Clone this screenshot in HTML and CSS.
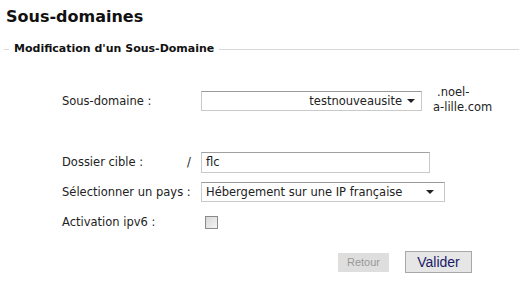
FILE: index.html
```html
<!DOCTYPE html>
<html>
<head>
<meta charset="utf-8">
<link rel="stylesheet" href="styles.css">
</head>
<body>
<h1 class="title">Sous-domaines</h1>
<fieldset class="box">
  <legend class="legend">Modification d'un Sous-Domaine</legend>
  <div class="form">
    <div class="row row-sub">
      <span class="label">Sous-domaine :</span>
      <span class="slash"></span>
      <div class="select sel-sub"><span class="sel-text right">testnouveausite</span><span class="arrow"></span></div>
      <span class="suffix"><span class="suffix-top">.noel-</span><br>a-lille.com</span>
    </div>
    <div class="row row-dir">
      <span class="label">Dossier cible :</span>
      <span class="slash">/</span>
      <div class="input">flc</div>
    </div>
    <div class="row row-pays">
      <span class="label">Sélectionner un pays :</span>
      <span class="slash"></span>
      <div class="select sel-pays"><span class="sel-text">Hébergement sur une IP française</span><span class="arrow"></span></div>
    </div>
    <div class="row row-ipv6">
      <span class="label">Activation ipv6 :</span>
      <span class="slash"></span>
      <span class="check"></span>
    </div>
    <div class="buttons">
      <span class="btn btn-back">Retour</span>
      <span class="btn btn-ok">Valider</span>
    </div>
  </div>
</fieldset>
</body>
</html>
```

FILE: styles.css
```css
html, body { margin: 0; padding: 0; background: #fff; }
body { font-family: "DejaVu Sans", Verdana, sans-serif; color: #222; width: 519px; height: 295px; overflow: hidden; }
.title { margin: 0; padding: 7px 0 0 6px; font-size: 16px; font-weight: bold; color: #111; height: 35px; line-height: 20px; letter-spacing: 0; }
.box { margin: 0 0 0 4px; padding: 0; border: 0; border-top: 1px solid #d8d8d8; min-width: 0; }
.legend { font-size: 11px; font-weight: bold; color: #111; padding: 0 5px 0 5px; margin-left: 5px; line-height: 14px; }
.form { padding-left: 58px; font-size: 11.5px; color: #222; }
.row { display: flex; align-items: center; white-space: nowrap; }
.label { width: 125px; flex: none; white-space: nowrap; }
.slash { width: 14px; flex: none; }
.row-sub { margin-top: 31px; height: 28px; }
.row-dir { margin-top: 35px; height: 24px; }
.row-pays { margin-top: 6px; height: 24px; }
.row-ipv6 { margin-top: 6px; height: 24px; }
.select { box-sizing: border-box; height: 20px; border: 1px solid #c9c9c9; border-top-color: #9a9a9a; display: flex; align-items: center; padding: 0 4px; background: #fff; }
.sel-sub { width: 221px; }
.sel-pays { width: 244px; }
.sel-text { flex: 1; white-space: nowrap; }
.sel-text.right { text-align: right; padding-right: 5px; }
.arrow { width: 0; height: 0; border-left: 4px solid transparent; border-right: 4px solid transparent; border-top: 4px solid #222; margin-right: 2px; }
.sel-pays .arrow { margin-right: 6px; }
.suffix { margin-left: 11px; line-height: 15px; margin-top: -2px; }
.suffix-top { padding-left: 4px; }
.input { box-sizing: border-box; width: 229px; height: 21px; border: 1px solid #c9c9c9; border-top-color: #a0a0a0; padding: 2px 4px; line-height: 15px; }
.check { box-sizing: border-box; width: 13px; height: 13px; border: 1px solid #8a8a8a; background: linear-gradient(135deg, #d8d8d8, #f4f4f4); margin-left: 4px; }
.buttons { display: flex; align-items: center; margin-top: 17px; padding-left: 276px; gap: 16px; font-family: "Liberation Sans", Arial, sans-serif; }
.btn { box-sizing: border-box; display: flex; align-items: center; justify-content: center; }
.btn-back { width: 51px; height: 19px; background: #dedede; color: #999; font-size: 11px; }
.btn-ok { width: 67px; height: 22px; background: #e6e6e6; border: 1px solid #a8a8a8; color: #1a1a66; font-size: 14px; }
```
